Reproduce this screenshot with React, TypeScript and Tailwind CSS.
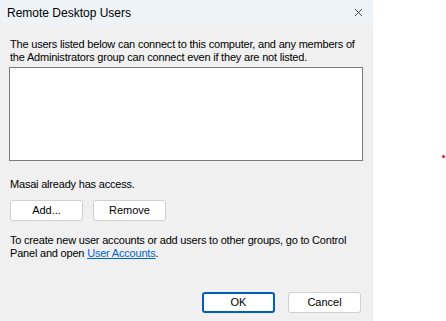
import { X } from "lucide-react";

const body = { fontFamily: '"Liberation Sans", Arial, sans-serif' };

function DlgButton({ label, primary }: { label: string; primary?: boolean }) {
  return (
    <button
      type="button"
      className={
        primary
          ? "w-[73px] h-[21px] bg-white rounded-[3px] border-2 border-[#005fb8] text-[11px] text-black flex items-center justify-center"
          : "w-[73px] h-[21px] bg-white rounded-[3px] border border-[#d0d0d0] text-[11px] text-black flex items-center justify-center"
      }
    >
      {label}
    </button>
  );
}

export default function App() {
  return (
    <div className="w-[446px] h-[321px] flex bg-white overflow-hidden" style={body}>
      <div className="w-[373px] h-full flex flex-col bg-[#f0f0f0]">
        {/* title bar */}
        <div className="h-[25px] shrink-0 bg-[#eef3f8] flex items-center justify-between pl-[7px] pr-[8px]">
          <span className="text-[12px] leading-[14px] text-black pt-[1px]">Remote Desktop Users</span>
          <X size={13} strokeWidth={1.3} className="text-black" />
        </div>

        <div className="flex flex-col px-[10px] pt-[13px] text-[11px] leading-[13px] tracking-[-0.2px] text-black">
          <p className="whitespace-nowrap">
            The users listed below can connect to this computer, and any members of
            <br />
            the Administrators group can connect even if they are not listed.
          </p>

          <div className="mt-[3px] -ml-[1px] w-[354px] h-[94px] shrink-0 bg-white border border-[#7a7a7a]" />

          <p className="mt-[17px]">Masai already has access.</p>

          <div className="flex gap-[10px] mt-[9px] tracking-normal">
            <DlgButton label="Add..." />
            <DlgButton label="Remove" />
          </div>

          <p className="mt-[13px] whitespace-nowrap">
            To create new user accounts or add users to other groups, go to Control
            <br />
            Panel and open <span className="text-[#0066cc] underline">User Accounts</span>.
          </p>

          <div className="flex justify-end gap-[13px] mt-[32px] pr-[2px] tracking-normal">
            <DlgButton label="OK" primary />
            <DlgButton label="Cancel" />
          </div>
        </div>
      </div>

      <div className="flex-1 pt-[155px] pl-[69px]">
        <div className="w-[3px] h-[3px] rounded-full bg-[#e02020]" />
      </div>
    </div>
  );
}
